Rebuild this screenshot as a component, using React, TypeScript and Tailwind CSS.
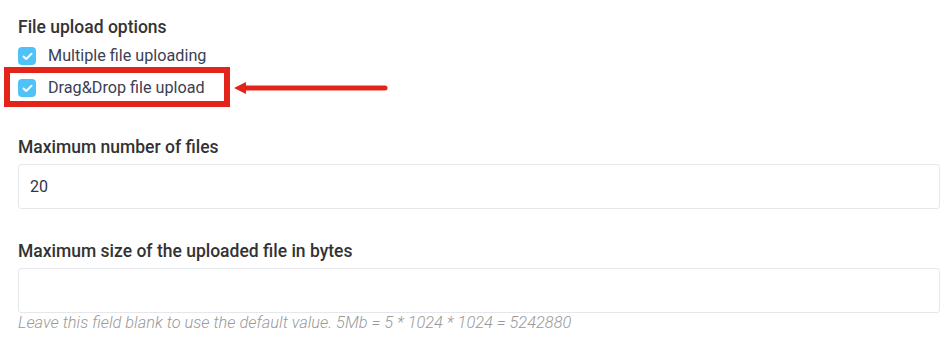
import React from "react";

function Check() {
  return (
    <span className="flex h-[18px] w-[18px] shrink-0 items-center justify-center rounded-[4px] bg-[#4fc3f7]">
      <svg width="11" height="9" viewBox="0 0 11 9" fill="none">
        <path d="M1.5 4.5 L4.2 7 L9.5 1.8" stroke="white" strokeWidth="2" strokeLinecap="round" strokeLinejoin="round" />
      </svg>
    </span>
  );
}

export default function App() {
  return (
    <div className="relative h-[346px] w-[947px] overflow-hidden bg-white pl-[18px] pr-[7px] pt-[15px]" style={{ fontFamily: "Roboto, 'Noto Sans', sans-serif" }}>
      <div className="text-[17.5px] font-medium leading-[24px] text-[#333]">File upload options</div>
      <div className="mt-[6px] flex h-[22px] items-center gap-[12px]">
        <Check />
        <span className="text-[16.2px] leading-[22px] text-[#3b4053]">Multiple file uploading</span>
      </div>
      <div className="relative mt-[10px] flex h-[22px] items-center gap-[12px]">
        <Check />
        <span className="text-[16.2px] leading-[22px] text-[#3b4053]">Drag&amp;Drop file upload</span>
        <div className="absolute left-[-14px] top-[-10px] h-[40px] w-[226px] border-[6px] border-[#e3241b]" />
        <svg className="absolute left-[215px] top-[1px]" width="155" height="20" viewBox="0 0 155 20">
          <path d="M10 10 H152" stroke="#e3241b" strokeWidth="5" strokeLinecap="round" />
          <path d="M1 10 L13 4 L13 16 Z" fill="#e3241b" />
        </svg>
      </div>
      <div className="mt-[36px] text-[17.5px] font-medium leading-[24px] text-[#333]">Maximum number of files</div>
      <div className="mt-[5px] flex h-[45px] items-center rounded-[3px] border border-[#e6e6ed] px-[11px] text-[16px] text-[#2f3649]">20</div>
      <div className="mt-[30px] text-[17.5px] font-medium leading-[24px] text-[#333]">Maximum size of the uploaded file in bytes</div>
      <div className="mt-[5px] h-[45px] rounded-[3px] border border-[#e6e6ed]" />
      <div className="text-[16.4px] font-light italic leading-[20px] text-[#9a9a9a]">
        Leave this field blank to use the default value. 5Mb = 5 * 1024 * 1024 = 5242880
      </div>
    </div>
  );
}
